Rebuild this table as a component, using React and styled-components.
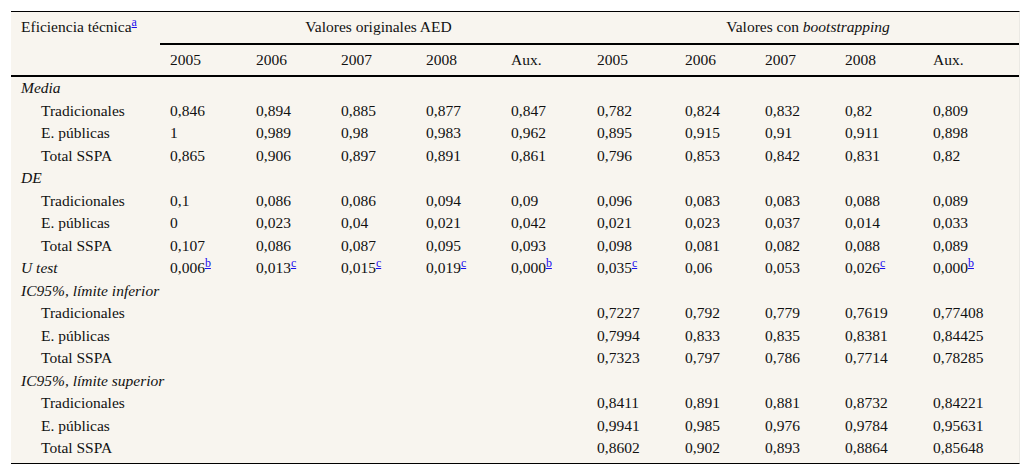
import React from "react";
import styled, { createGlobalStyle } from "styled-components";

const GlobalStyle = createGlobalStyle`
  html, body {
    margin: 0;
    padding: 0;
    background: #ffffff;
  }
  body {
    font-family: "Liberation Serif", "Times New Roman", serif;
  }
`;

const years = ["2005", "2006", "2007", "2008", "Aux."];
const colWidths = [149, 86, 85, 85, 85, 86, 88, 80, 80, 88, 96];

const groups = [
  {
    title: "Media",
    rows: [
      ["Tradicionales", "0,846", "0,894", "0,885", "0,877", "0,847", "0,782", "0,824", "0,832", "0,82", "0,809"],
      ["E. públicas", "1", "0,989", "0,98", "0,983", "0,962", "0,895", "0,915", "0,91", "0,911", "0,898"],
      ["Total SSPA", "0,865", "0,906", "0,897", "0,891", "0,861", "0,796", "0,853", "0,842", "0,831", "0,82"],
    ],
  },
  {
    title: "DE",
    rows: [
      ["Tradicionales", "0,1", "0,086", "0,086", "0,094", "0,09", "0,096", "0,083", "0,083", "0,088", "0,089"],
      ["E. públicas", "0", "0,023", "0,04", "0,021", "0,042", "0,021", "0,023", "0,037", "0,014", "0,033"],
      ["Total SSPA", "0,107", "0,086", "0,087", "0,095", "0,093", "0,098", "0,081", "0,082", "0,088", "0,089"],
    ],
  },
  {
    title: "U test",
    values: [
      ["0,006", "b"], ["0,013", "c"], ["0,015", "c"], ["0,019", "c"], ["0,000", "b"],
      ["0,035", "c"], ["0,06"], ["0,053"], ["0,026", "c"], ["0,000", "b"],
    ],
    rows: [],
  },
  {
    title: "IC95%, límite inferior",
    rows: [
      ["Tradicionales", "", "", "", "", "", "0,7227", "0,792", "0,779", "0,7619", "0,77408"],
      ["E. públicas", "", "", "", "", "", "0,7994", "0,833", "0,835", "0,8381", "0,84425"],
      ["Total SSPA", "", "", "", "", "", "0,7323", "0,797", "0,786", "0,7714", "0,78285"],
    ],
  },
  {
    title: "IC95%, límite superior",
    rows: [
      ["Tradicionales", "", "", "", "", "", "0,8411", "0,891", "0,881", "0,8732", "0,84221"],
      ["E. públicas", "", "", "", "", "", "0,9941", "0,985", "0,976", "0,9784", "0,95631"],
      ["Total SSPA", "", "", "", "", "", "0,8602", "0,902", "0,893", "0,8864", "0,85648"],
    ],
  },
];

const Wrapper = styled.div`
  margin: 11px 0 0 11px;
  width: 1008px;
  background: #f8f5ef;
  border-top: 1px solid #000;
  border-bottom: 1px solid #000;
  border-right: 1px solid #ebe9e4;
  padding-bottom: 3px;
`;

const Table = styled.table`
  width: 1008px;
  border-collapse: collapse;
  table-layout: fixed;
  font-family: "Liberation Serif", "Times New Roman", serif;
  font-size: 15.5px;
  line-height: 22.5px;
  color: #111;
`;

const HeadCell = styled.th`
  font-weight: normal;
  text-align: ${(p) => (p.$center ? "center" : "left")};
  vertical-align: top;
  padding: 4px 0 4px 10px;
  white-space: nowrap;
  border-bottom: ${(p) => (p.$rule ? "2px solid #000" : "none")};
`;

const Cell = styled.td`
  padding: 0 0 0 ${(p) => (p.$indent ? "30px" : "10px")};
  white-space: nowrap;
  font-style: ${(p) => (p.$italic ? "italic" : "normal")};
`;

const HeadRule = styled.tr`
  th {
    border-bottom: 2px solid #000;
  }
`;

const Note = styled.sup`
  font-size: 12px;
  line-height: 0;
  vertical-align: 6px;
  color: #1a0dee;
  text-decoration: underline;
`;

const Em = styled.em`
  font-style: italic;
`;

export default function App() {
  return (
    <>
      <GlobalStyle />
      <Wrapper>
        <Table>
          <colgroup>
            {colWidths.map((w, i) => (
              <col key={i} style={{ width: w }} />
            ))}
          </colgroup>
          <thead>
            <tr>
              <HeadCell rowSpan={2} $rule>
                Eficiencia técnica<Note>a</Note>
              </HeadCell>
              <HeadCell colSpan={5} $center $rule>
                Valores originales AED
              </HeadCell>
              <HeadCell colSpan={5} $center $rule>
                Valores con <Em>bootstrapping</Em>
              </HeadCell>
            </tr>
            <HeadRule>
              {[...years, ...years].map((y, i) => (
                <HeadCell key={i}>{y}</HeadCell>
              ))}
            </HeadRule>
          </thead>
          <tbody>
            {groups.map((g) => (
              <React.Fragment key={g.title}>
                <tr>
                  <Cell $italic>{g.title}</Cell>
                  {g.values
                    ? g.values.map(([v, n], i) => (
                        <Cell key={i}>
                          {v}
                          {n && <Note>{n}</Note>}
                        </Cell>
                      ))
                    : Array.from({ length: 10 }, (_, i) => <Cell key={i} />)}
                </tr>
                {g.rows.map((r) => (
                  <tr key={g.title + r[0]}>
                    <Cell $indent>{r[0]}</Cell>
                    {r.slice(1).map((v, i) => (
                      <Cell key={i}>{v}</Cell>
                    ))}
                  </tr>
                ))}
              </React.Fragment>
            ))}
          </tbody>
        </Table>
      </Wrapper>
    </>
  );
}
